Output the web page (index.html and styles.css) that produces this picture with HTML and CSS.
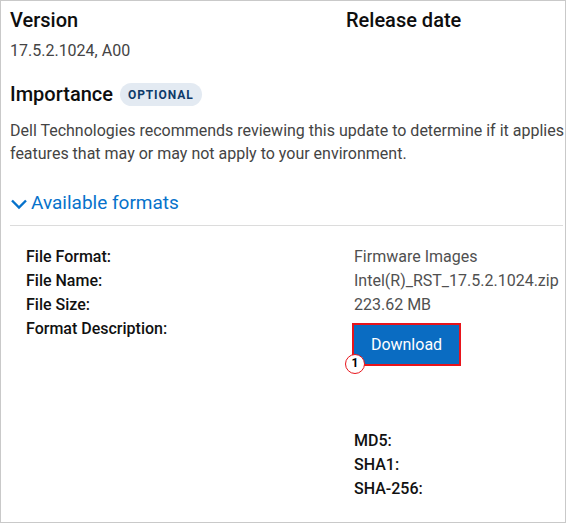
FILE: index.html
```html
<!DOCTYPE html>
<html lang="en">
<head>
<meta charset="UTF-8">
<title>Driver details</title>
<link rel="stylesheet" href="styles.css">
</head>
<body>

<div class="card">
<div class="top-row">
<div class="col version-col">
<h2>Version</h2>
<p class="value">17.5.2.1024, A00</p>
</div>
<div class="col">
<h2>Release date</h2>
</div>
</div>

<div class="importance">
<h2>Importance</h2>
<span class="badge">OPTIONAL</span>
</div>
<p class="desc">Dell Technologies recommends reviewing this update to determine if it applies to your system. The update contains changes that impact only certain configurations, or provides new<br>features that may or may not apply to your environment.</p>

<div class="formats-toggle">
<svg class="chevron" width="18" height="12" viewBox="0 0 18 12"><path d="M2 2.5 L9 9.5 L16 2.5" fill="none" stroke="#0672cb" stroke-width="2.4"/></svg>
<span>Available formats</span>
</div>

<div class="formats">
<div class="labels">
<div>File Format:</div>
<div>File Name:</div>
<div>File Size:</div>
<div>Format Description:</div>
</div>
<div class="values">
<div>Firmware Images</div>
<div>Intel(R)_RST_17.5.2.1024.zip</div>
<div>223.62 MB</div>
<div class="btn-wrap">
<button class="download">Download</button>
<span class="step">1</span>
</div>
<div class="hashes">
<div>MD5:</div>
<div>SHA1:</div>
<div>SHA-256:</div>
</div>
</div>
</div>
</div>

</body>
</html>
```

FILE: styles.css
```css
body {
margin: 0;
background: #fff;
font-family: Roboto, "Liberation Sans", sans-serif;
color: #0e0e0e;
}

.card {
width: 566px;
height: 523px;
box-sizing: border-box;
border: 1px solid #c9c9c9;
padding: 7px 0 0 9px;
overflow: hidden;
}

h2 {
margin: 0;
font-size: 20px;
font-weight: 500;
line-height: 24px;
}

.top-row {
display: flex;
}

.version-col {
width: 336px;
}

.value {
margin: 9px 0 0;
font-size: 16px;
line-height: 20px;
color: #444;
}

.importance {
display: flex;
align-items: center;
margin-top: 21px;
}

.badge {
margin-left: 7px;
padding: 0 8px;
height: 23px;
line-height: 24px;
border-radius: 12px;
background: #e3eaf2;
color: #0e3a69;
font-size: 12px;
font-weight: 700;
letter-spacing: 0.9px;
}

.desc {
margin: 13px 0 0;
white-space: nowrap;
font-size: 16px;
line-height: 23px;
color: #444;
}

.formats-toggle {
display: flex;
align-items: center;
margin-top: 26px;
padding-bottom: 10px;
border-bottom: 1px solid #dcdcdc;
margin-right: 2px;
color: #0672cb;
font-size: 19px;
line-height: 24px;
}

.chevron {
margin: 2px 3px 0 0;
}

.formats {
display: flex;
padding: 19px 0 0 16px;
font-size: 16px;
line-height: 24px;
}

.labels {
width: 328px;
font-weight: 500;
color: #111;
}

.values {
color: #505050;
}

.btn-wrap {
position: relative;
margin: 6px 0 0 -2px;
width: 109px;
}

.download {
display: block;
width: 109px;
height: 43px;
border: 2px solid #e8141b;
background: #0a6cc2;
color: #fff;
font-family: Roboto, sans-serif;
font-size: 16px;
padding: 0;
}

.step {
position: absolute;
left: -7px;
top: 31px;
width: 20px;
height: 20px;
box-sizing: border-box;
border: 1.5px solid #e8141b;
border-radius: 50%;
background: #fff;
color: #000;
font-size: 12px;
font-weight: 700;
line-height: 17px;
text-align: center;
}

.hashes {
margin-top: 63px;
font-weight: 500;
color: #111;
}
```
